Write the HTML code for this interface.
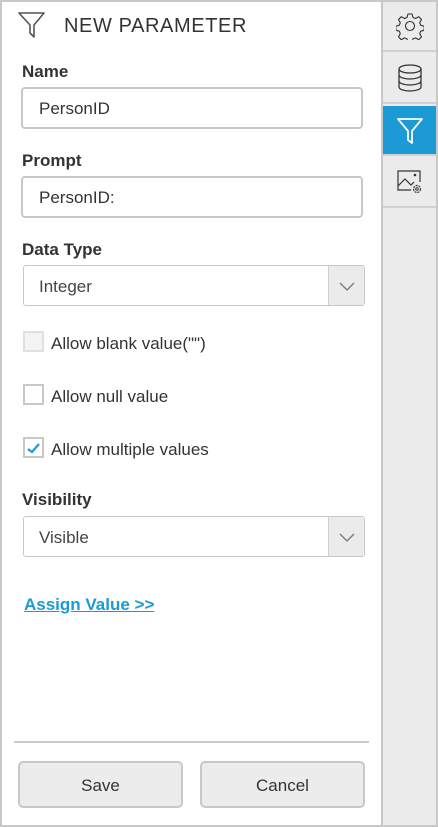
<!DOCTYPE html>
<html><head><meta charset="utf-8"><style>
*{box-sizing:border-box;margin:0;padding:0}
body{width:438px;height:827px;background:#fff;font-family:"Liberation Sans",sans-serif;color:#333;position:relative;overflow:hidden}
.frame{position:absolute;left:0;top:0;width:438px;height:827px;border:2px solid #c8c8c8}
.side{position:absolute;left:381px;top:2px;width:55px;height:823px;background:#ebebeb;border-left:2px solid #c8c8c8}
.tab{position:absolute;left:0;width:53px;height:50px;border-bottom:2px solid #d0d0d0;display:flex;align-items:center;justify-content:center}
.a{position:absolute;font-size:17px;color:#333}
.lbl{position:absolute;left:22px;font-weight:bold;font-size:17px;color:#333}
.inp{position:absolute;left:21px;width:342px;height:42px;border:2px solid #c8c8c8;border-radius:4px;padding-left:16px;line-height:40px;font-size:17px;color:#333}
.sel{position:absolute;left:23px;width:342px;height:41px;border:1px solid #c8c8c8;border-radius:3px;padding-left:15px;line-height:41px;font-size:17px;color:#444}
.sel .dd{position:absolute;right:0;top:0;width:36px;height:39px;background:#ebebeb;border-left:1px solid #d0d0d0}
.cb{position:absolute;left:23px;width:21px;height:21px;border:2px solid #c8c8c8;background:#fff}
.cbl{position:absolute;left:51px;font-size:17px;color:#333}
.btn{position:absolute;top:761px;width:165px;height:47px;background:#ececec;border:2px solid #c8c8c8;border-radius:5px;text-align:center;line-height:45px;font-size:17px;color:#333}
</style></head><body>
<div class="frame"></div>
<svg style="position:absolute;left:17px;top:11px" width="30" height="28" viewBox="0 0 30 28"><path d="M2 2 H27 L17 14 V26 L13 22 V14 Z" fill="none" stroke="#555" stroke-width="1.6" stroke-linejoin="round"/></svg>
<div class="a" style="left:64px;top:15px;font-size:20px;letter-spacing:0.6px;color:#333">NEW PARAMETER</div>
<div class="lbl" style="top:62px">Name</div>
<div class="inp" style="top:87px">PersonID</div>
<div class="lbl" style="top:151px">Prompt</div>
<div class="inp" style="top:176px">PersonID:</div>
<div class="lbl" style="top:240px">Data Type</div>
<div class="sel" style="top:265px">Integer<div class="dd"><svg width="36" height="39"><path d="M11 17 L18 24 L25 17" fill="none" stroke="#777" stroke-width="1.3"/></svg></div></div>
<div class="cb" style="top:331px;background:#f3f3f3;border-color:#e0e0e0"></div>
<div class="cbl" style="top:334px">Allow blank value("")</div>
<div class="cb" style="top:384px"></div>
<div class="cbl" style="top:387px">Allow null value</div>
<div class="cb" style="top:437px"><svg width="17" height="17" style="position:absolute;left:0;top:0"><path d="M3 10 L7 13 L14 5" fill="none" stroke="#1b9ad6" stroke-width="2.2"/></svg></div>
<div class="cbl" style="top:440px">Allow multiple values</div>
<div class="lbl" style="top:490px">Visibility</div>
<div class="sel" style="top:516px">Visible<div class="dd"><svg width="36" height="39"><path d="M11 17 L18 24 L25 17" fill="none" stroke="#777" stroke-width="1.3"/></svg></div></div>
<div class="a" style="left:24px;top:595px;color:#1b9ad6;text-decoration:underline;font-weight:bold;font-size:17px">Assign Value &gt;&gt;</div>
<div style="position:absolute;left:14px;top:741px;width:355px;height:2px;background:#c8c8c8"></div>
<div class="btn" style="left:18px">Save</div>
<div class="btn" style="left:200px">Cancel</div>
<div class="side">
<div class="tab" style="top:0"><svg width="28" height="28" viewBox="0 0 28 28"><path d="M12 2h4l1 3.5 2.5 1 3.2-1.8 2.8 2.8-1.8 3.2 1 2.5 3.5 1v4l-3.5 1-1 2.5 1.8 3.2-2.8 2.8-3.2-1.8-2.5 1-1 3.5h-4l-1-3.5-2.5-1-3.2 1.8-2.8-2.8 1.8-3.2-1-2.5-3.5-1v-4l3.5-1 1-2.5-1.8-3.2 2.8-2.8 3.2 1.8 2.5-1z" fill="none" stroke="#333" stroke-width="1.1" stroke-linejoin="round"/><circle cx="14" cy="14" r="4.5" fill="none" stroke="#333" stroke-width="1.1"/></svg></div>
<div class="tab" style="top:52px"><svg width="26" height="30" viewBox="0 0 26 30"><ellipse cx="13" cy="6" rx="11" ry="4" fill="none" stroke="#333" stroke-width="1.3"/><path d="M2 6v18c0 2.2 5 4 11 4s11-1.8 11-4V6M2 12c0 2.2 5 4 11 4s11-1.8 11-4M2 18c0 2.2 5 4 11 4s11-1.8 11-4" fill="none" stroke="#333" stroke-width="1.3"/></svg></div>
<div class="tab" style="top:104px;background:#1b9ad6;border-bottom-color:#d0d0d0"><svg width="30" height="30" viewBox="0 0 30 30"><path d="M3 4 H27 L17 16 V28 L13 25 V16 Z" fill="none" stroke="#fff" stroke-width="1.8" stroke-linejoin="round"/></svg></div>
<div class="tab" style="top:156px"><svg width="28" height="28" viewBox="0 0 28 28"><path d="M15 22H2V3h22v11" fill="none" stroke="#333" stroke-width="1.2"/><path d="M2 18l7-7 6 6 3-3" fill="none" stroke="#333" stroke-width="1.2"/><circle cx="19" cy="7" r="1.3" fill="#333"/><circle cx="21" cy="21" r="3.5" fill="none" stroke="#333" stroke-width="1.2" stroke-dasharray="2 1"/><circle cx="21" cy="21" r="1.3" fill="none" stroke="#333" stroke-width="1"/></svg></div>
</div>
</body></html>
